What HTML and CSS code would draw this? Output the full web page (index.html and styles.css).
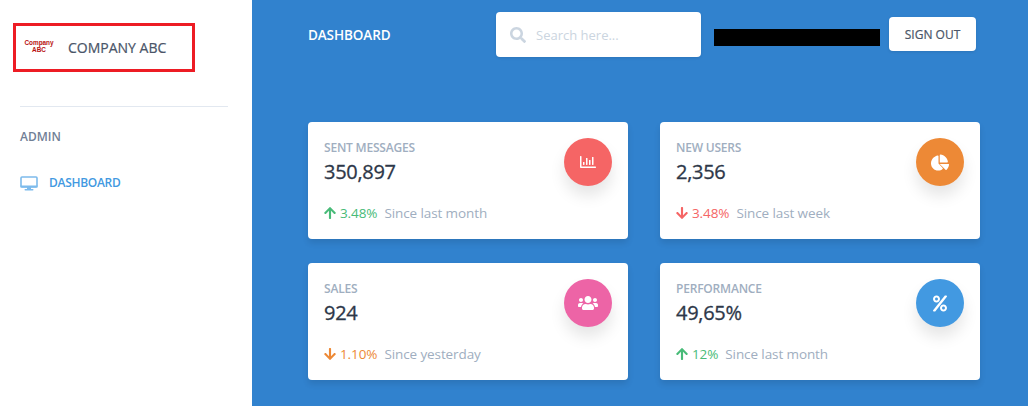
FILE: index.html
```html
<!DOCTYPE html>
<html lang="en">
<head>
    <meta charset="UTF-8">
    <title>Dashboard</title>
    <link rel="stylesheet" href="styles.css">
</head>
<body>

<div class="layout">
    <aside class="sidebar">
        <div class="brand">
            <div class="brand-logo">Company<br>ABC</div>
            <span class="brand-name">COMPANY ABC</span>
        </div>
        <hr class="side-line">
        <div class="side-label">ADMIN</div>
        <a class="side-link" href="#">
            <svg class="side-icon" viewBox="0 0 18 15">
                <rect x="1" y="1" width="16" height="10" rx="1" fill="none" stroke="#7dbbec" stroke-width="1.6"/>
                <rect x="0.5" y="9.5" width="17" height="2" fill="#7dbbec"/>
                <rect x="7" y="11" width="4" height="2" fill="#7dbbec"/>
                <rect x="4.5" y="13" width="9" height="1.5" rx="0.7" fill="#7dbbec"/>
            </svg>
            DASHBOARD
        </a>
    </aside>

    <main class="main">
        <div class="topbar">
            <div class="page-title">DASHBOARD</div>
            <div class="search">
                <svg class="search-icon" viewBox="0 0 512 512"><path d="M505 442.7L405.3 343c-4.5-4.5-10.6-7-17-7H372c27.6-35.3 44-79.7 44-128C416 93.1 322.9 0 208 0S0 93.1 0 208s93.1 208 208 208c48.3 0 92.7-16.4 128-44v16.3c0 6.4 2.5 12.5 7 17l99.7 99.7c9.4 9.4 24.6 9.4 33.9 0l28.3-28.3c9.4-9.4 9.4-24.6.1-34zM208 336c-70.7 0-128-57.2-128-128 0-70.7 57.2-128 128-128 70.7 0 128 57.2 128 128 0 70.7-57.2 128-128 128z"/></svg>
                <span>Search here...</span>
            </div>
            <div class="redacted"></div>
            <button class="signout">SIGN OUT</button>
        </div>

        <div class="cards">
            <div class="card">
                <div class="card-top">
                    <div>
                        <div class="card-label">SENT MESSAGES</div>
                        <div class="card-value">350,897</div>
                    </div>
                    <div class="circle red">
                        <svg class="chart" viewBox="0 0 512 512"><path d="M396.8 352h22.4c6.4 0 12.8-6.4 12.8-12.8V108.8c0-6.4-6.4-12.8-12.8-12.8h-22.4c-6.4 0-12.8 6.4-12.8 12.8v230.4c0 6.4 6.4 12.8 12.8 12.8zm-192 0h22.4c6.4 0 12.8-6.4 12.8-12.8V140.8c0-6.4-6.4-12.8-12.8-12.8h-22.4c-6.4 0-12.8 6.4-12.8 12.8v198.4c0 6.4 6.4 12.8 12.8 12.8zm96 0h22.4c6.4 0 12.8-6.4 12.8-12.8V204.8c0-6.4-6.4-12.8-12.8-12.8h-22.4c-6.4 0-12.8 6.4-12.8 12.8v134.4c0 6.4 6.4 12.8 12.8 12.8zM496 400H48V80c0-8.84-7.16-16-16-16H16C7.16 64 0 71.16 0 80v336c0 17.67 14.33 32 32 32h464c8.84 0 16-7.16 16-16v-16c0-8.84-7.16-16-16-16zm-387.2-48h22.4c6.4 0 12.8-6.4 12.8-12.8v-70.4c0-6.4-6.4-12.8-12.8-12.8h-22.4c-6.4 0-12.8 6.4-12.8 12.8v70.4c0 6.4 6.4 12.8 12.8 12.8z"/></svg>
                    </div>
                </div>
                <div class="card-foot">
                    <svg class="arrow green" viewBox="0 0 448 512"><path d="M34.9 289.5l-22.2-22.2c-9.4-9.4-9.4-24.6 0-33.9L207 39c9.4-9.4 24.6-9.4 33.9 0l194.3 194.3c9.4 9.4 9.4 24.6 0 33.9L413 289.4c-9.5 9.5-25 9.3-34.3-.4L264 168.6V456c0 13.3-10.7 24-24 24h-32c-13.3 0-24-10.7-24-24V168.6L69.2 289.1c-9.3 9.8-24.8 10-34.3.4z"/></svg>
                    <span class="change green">3.48%</span>
                    <span class="since">Since last month</span>
                </div>
            </div>

            <div class="card">
                <div class="card-top">
                    <div>
                        <div class="card-label">NEW USERS</div>
                        <div class="card-value">2,356</div>
                    </div>
                    <div class="circle orange">
                        <svg class="pie" viewBox="0 0 576 544"><path d="M558.3 320.6H277.9l186.7 186.7c7.1 7.1 18.9 7.7 26.2.8 45.7-43.1 77.2-101.1 86.4-166.3 1.6-11.2-7.6-21.2-18.9-21.2zm-17.3-64C531.7 127.8 427.7 23.8 299 14.6c-9.8-.7-18 7.6-18 17.4V272h240c9.8 0 18.2-8.2 17.4-17.4zM240 304V64.2c0-11.3-10-20.5-21.2-18.9C97.7 62.3 5.3 167.4 0 293.7c-5.4 130.4 105.6 242.3 236 237.1 51.4-2.1 98.7-22.1 135.7-54.6 8.1-7.1 8.7-19.6 1-27.3L240 304z"/></svg>
                    </div>
                </div>
                <div class="card-foot">
                    <svg class="arrow red-text" viewBox="0 0 448 512"><path d="M413.1 222.5l22.2 22.2c9.4 9.4 9.4 24.6 0 33.9L241 473c-9.4 9.4-24.6 9.4-33.9 0L12.7 278.6c-9.4-9.4-9.4-24.6 0-33.9l22.2-22.2c9.5-9.5 25-9.3 34.3.4L184 343.4V56c0-13.3 10.7-24 24-24h32c13.3 0 24 10.7 24 24v287.4l114.8-120.5c9.3-9.8 24.8-10 34.3-.4z"/></svg>
                    <span class="change red-text">3.48%</span>
                    <span class="since">Since last week</span>
                </div>
            </div>

            <div class="card">
                <div class="card-top">
                    <div>
                        <div class="card-label">SALES</div>
                        <div class="card-value">924</div>
                    </div>
                    <div class="circle pink">
                        <svg class="users" viewBox="0 0 640 512"><path d="M96 224c35.3 0 64-28.7 64-64s-28.7-64-64-64-64 28.7-64 64 28.7 64 64 64zm448 0c35.3 0 64-28.7 64-64s-28.7-64-64-64-64 28.7-64 64 28.7 64 64 64zm32 32h-64c-17.6 0-33.5 7.1-45.1 18.6 40.3 22.1 68.9 62 75.1 109.4h66c17.7 0 32-14.3 32-32v-32c0-35.3-28.7-64-64-64zm-256 0c61.9 0 112-50.1 112-112S381.9 32 320 32 208 82.1 208 144s50.1 112 112 112zm76.8 32h-8.3c-20.8 10-43.9 16-68.5 16s-47.6-6-68.5-16h-8.3C179.6 288 128 339.6 128 403.2V432c0 26.5 21.5 48 48 48h288c26.5 0 48-21.5 48-48v-28.8c0-63.6-51.6-115.2-115.2-115.2zm-223.7-13.4C161.5 263.1 145.6 256 128 256H64c-35.3 0-64 28.7-64 64v32c0 17.7 14.3 32 32 32h65.9c6.3-47.4 34.9-87.3 75.2-109.4z"/></svg>
                    </div>
                </div>
                <div class="card-foot">
                    <svg class="arrow orange-text" viewBox="0 0 448 512"><path d="M413.1 222.5l22.2 22.2c9.4 9.4 9.4 24.6 0 33.9L241 473c-9.4 9.4-24.6 9.4-33.9 0L12.7 278.6c-9.4-9.4-9.4-24.6 0-33.9l22.2-22.2c9.5-9.5 25-9.3 34.3.4L184 343.4V56c0-13.3 10.7-24 24-24h32c13.3 0 24 10.7 24 24v287.4l114.8-120.5c9.3-9.8 24.8-10 34.3-.4z"/></svg>
                    <span class="change orange-text">1.10%</span>
                    <span class="since">Since yesterday</span>
                </div>
            </div>

            <div class="card">
                <div class="card-top">
                    <div>
                        <div class="card-label">PERFORMANCE</div>
                        <div class="card-value">49,65%</div>
                    </div>
                    <div class="circle blue">
                        <svg class="percent" viewBox="0 0 448 512"><path d="M112 224c61.9 0 112-50.1 112-112S173.9 0 112 0 0 50.1 0 112s50.1 112 112 112zm0-160c26.5 0 48 21.5 48 48s-21.5 48-48 48-48-21.5-48-48 21.5-48 48-48zm224 224c-61.9 0-112 50.1-112 112s50.1 112 112 112 112-50.1 112-112-50.1-112-112-112zm0 160c-26.5 0-48-21.5-48-48s21.5-48 48-48 48 21.5 48 48-21.5 48-48 48zM392.3.2l31.6.1c19.4.1 30.9 21.8 20 37.8L77.4 501.6a23.95 23.95 0 0 1-20 10.5l-33.4-.1c-19.5 0-30.9-21.9-19.8-37.9L372.3 10.3C376.8 3.8 384.2 0 392.3.2z"/></svg>
                    </div>
                </div>
                <div class="card-foot">
                    <svg class="arrow green" viewBox="0 0 448 512"><path d="M34.9 289.5l-22.2-22.2c-9.4-9.4-9.4-24.6 0-33.9L207 39c9.4-9.4 24.6-9.4 33.9 0l194.3 194.3c9.4 9.4 9.4 24.6 0 33.9L413 289.4c-9.5 9.5-25 9.3-34.3-.4L264 168.6V456c0 13.3-10.7 24-24 24h-32c-13.3 0-24-10.7-24-24V168.6L69.2 289.1c-9.3 9.8-24.8 10-34.3.4z"/></svg>
                    <span class="change green">12%</span>
                    <span class="since">Since last month</span>
                </div>
            </div>
        </div>
    </main>
</div>

</body>
</html>
```

FILE: styles.css
```css
body {
    margin: 0;
    font-family: "Open Sans", sans-serif;
    color: #2d3748;
}
.layout {
    display: flex;
    height: 406px;
    overflow: hidden;
}
.sidebar {
    width: 252px;
    flex-shrink: 0;
    background-color: white;
    padding-top: 23px;
    box-sizing: border-box;
}
.brand {
    display: flex;
    align-items: center;
    box-sizing: border-box;
    width: 182px;
    height: 49px;
    margin-left: 13px;
    border: 3px solid #ed1c24;
}
.brand-logo {
    width: 52px;
    margin-left: -3px;
    margin-right: 3px;
    text-align: center;
    font-family: "Liberation Sans", sans-serif;
    font-size: 6.4px;
    line-height: 7px;
    font-weight: bold;
    color: #b80f0f;
    flex-shrink: 0;
    margin-top: -4px;
}
.brand-name {
    font-size: 14px;
    color: #4a5568;
    -webkit-text-stroke: 0.2px #4a5568;
}
.side-line {
    border: none;
    border-top: 1px solid #e2e8f0;
    margin: 34px 24px 0 20px;
}
.side-label {
    margin: 21px 0 0 20px;
    font-size: 12px;
    line-height: 18px;
    font-weight: 600;
    color: #718096;
}
.side-link {
    display: flex;
    align-items: center;
    gap: 11px;
    margin: 28px 0 0 20px;
    font-size: 12px;
    line-height: 18px;
    font-weight: 600;
    color: #4299e1;
    text-decoration: none;
    letter-spacing: -0.3px;
}
.side-icon {
    width: 18px;
    height: 15px;
}
.main {
    flex: 1;
    background-color: #3182ce;
    padding: 0 48px 0 56px;
}
.topbar {
    display: flex;
    align-items: flex-start;
    height: 122px;
}
.page-title {
    width: 188px;
    margin-top: 26px;
    font-size: 13.5px;
    line-height: 18px;
    font-weight: 600;
    color: white;
    letter-spacing: -0.1px;
}
.search {
    display: flex;
    align-items: center;
    gap: 10px;
    box-sizing: border-box;
    width: 205px;
    height: 45px;
    margin-top: 12px;
    padding-left: 14px;
    background-color: white;
    border-radius: 4px;
    font-size: 13px;
    color: #cbd5e0;
    box-shadow: 0 1px 3px rgba(0, 0, 0, 0.1);
}
.search-icon {
    width: 16px;
    height: 16px;
    fill: #cbd5e0;
}
.redacted {
    width: 166px;
    height: 17px;
    margin: 29px 9px 0 13px;
    background-color: black;
}
.signout {
    width: 87px;
    height: 34px;
    margin-top: 17px;
    padding: 0;
    border: none;
    border-radius: 4px;
    background-color: white;
    font-family: inherit;
    font-size: 12px;
    color: #4a5568;
    -webkit-text-stroke: 0.2px #4a5568;
    box-shadow: 0 1px 3px rgba(0, 0, 0, 0.1);
}
.cards {
    display: grid;
    grid-template-columns: 320px 320px;
    column-gap: 32px;
    row-gap: 24px;
}
.card {
    box-sizing: border-box;
    height: 117px;
    padding: 17px 16px 0;
    background-color: white;
    border-radius: 4px;
    box-shadow: 0 4px 6px rgba(0, 0, 0, 0.1);
}
.card-top {
    display: flex;
    justify-content: space-between;
    height: 62px;
}
.card-label {
    font-size: 12px;
    line-height: 18px;
    font-weight: 600;
    color: #a0aec0;
    letter-spacing: -0.2px;
}
.card-value {
    margin-top: 2px;
    font-size: 20px;
    line-height: 26px;
    color: #2d3748;
    -webkit-text-stroke: 0.3px #2d3748;
    letter-spacing: -0.3px;
}
.circle {
    display: flex;
    align-items: center;
    justify-content: center;
    width: 48px;
    height: 48px;
    margin-top: -1px;
    border-radius: 50%;
    box-shadow: 0 10px 15px rgba(0, 0, 0, 0.1);
}
.circle svg {
    fill: white;
}
.red { background-color: #f56565; }
.orange { background-color: #ed8936; }
.pink { background-color: #ed64a6; }
.blue { background-color: #4299e1; }
.chart { width: 16px; height: 16px; }
.pie { width: 18px; height: 17px; }
.users { width: 20px; height: 16px; }
.percent { width: 14px; height: 17px; }
.card-foot {
    display: flex;
    align-items: center;
    height: 24px;
    font-size: 13.5px;
    letter-spacing: -0.1px;
}
.arrow {
    width: 12px;
    height: 14px;
    margin-right: 4px;
    fill: currentColor;
}
.change {
    margin-right: 7px;
}
.since {
    color: #a0aec0;
}
.green { color: #48bb78; }
.red-text { color: #f56565; }
.orange-text { color: #ed8936; }
```
